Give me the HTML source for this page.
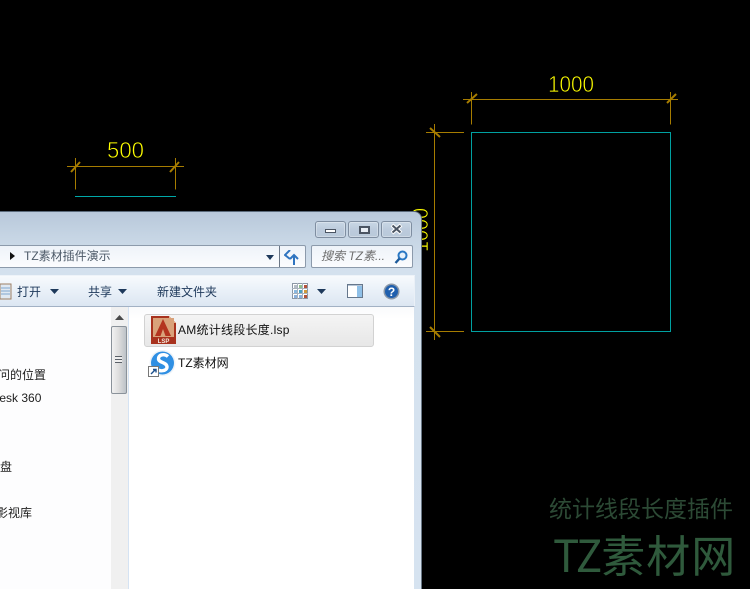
<!DOCTYPE html>
<html><head><meta charset="utf-8"><style>
html,body{margin:0;padding:0;background:#000;width:750px;height:589px;overflow:hidden}
body{position:relative;font-family:"Liberation Sans","Noto Sans CJK SC",sans-serif}
div,svg,span.a{position:absolute}
.t{font-size:12px;line-height:16px;white-space:nowrap;color:#1e1e1e}
.tb{color:#1e395b}
.b{top:221px;height:15px;width:29px;border:1px solid #7f8ea1;border-radius:3px;background:linear-gradient(#c9d7e5,#bccbdc 50%,#b9c9da);box-shadow:inset 0 0 0 1px rgba(255,255,255,.3)}
</style></head><body>
<svg width="750" height="589" style="left:0;top:0" shape-rendering="crispEdges">
<g stroke="#a67c00" stroke-width="1" fill="none">
<path d="M463 99.500H678M471.500 92V124.500M670.500 92V124.500M426 132.500H464M426 331.500H464M434.500 124V340M67 166.500H184M75.500 158V189.500M175.500 158V189.500"/>
</g>
<g stroke="#a67c00" stroke-width="2" fill="none" shape-rendering="auto">
<path d="M467 103L477 94M667 103L676 94M71 172L80 162M170 172L179 162M430 128L440 137M430 327L440 337"/>
</g>
<g fill="none" stroke="#00a0a0" stroke-width="1">
<rect x="471.500" y="132.500" width="199" height="199"/>
</g>
<path d="M75 196.500H176" stroke="#00a8a8" stroke-width="1"/>
<g fill="#ffff00" stroke="#000" stroke-width=".65" font-family="Liberation Sans, sans-serif" font-size="23" shape-rendering="auto" style="paint-order:fill stroke">
<text x="548" y="92" textLength="46" lengthAdjust="spacingAndGlyphs">1000</text>
<text x="107" y="158" textLength="37" lengthAdjust="spacingAndGlyphs">500</text>
<text transform="translate(428 252) rotate(-90)" textLength="44" lengthAdjust="spacingAndGlyphs">1000</text>
</g>
</svg>

<div style="left:549px;top:492px;font-size:23px;line-height:30px;color:#2c4a35;font-family:'Noto Sans CJK SC',sans-serif;white-space:nowrap">统计线段长度插件</div>
<div style="left:553px;top:522px;font-size:44px;line-height:62px;color:#2f5a3c;font-family:'Noto Sans CJK SC',sans-serif;white-space:nowrap;letter-spacing:1px"><span style="letter-spacing:-1px">TZ</span>素材网</div>

<!-- window -->
<div style="left:-8px;top:211px;width:429px;height:378px;background:linear-gradient(#b8c8da 0,#c6d5e4 25px,#d4e1ee 60px,#d6e3f0 100%);border-right:1px solid #6a7886;border-top:1px solid #5a6a7a;border-top-right-radius:8px"></div>
<div class="b" style="left:315px"></div>
<div class="b" style="left:348px"></div>
<div class="b" style="left:381px;width:29px"></div>
<div style="left:325px;top:229px;width:9px;height:2px;border:1px solid #4b5563;background:#fff"></div>
<div style="left:359px;top:226px;width:7px;height:4px;border:2px solid #4b5563;background:#e8eef5"></div>
<svg width="14" height="12" style="left:390px;top:223px"><path d="M2 2L11 10M11 2L2 10" stroke="#fff" stroke-width="4"/><path d="M2.500 2.500L10.500 9.500M10.500 2.500L2.500 9.500" stroke="#4b5563" stroke-width="2"/></svg>

<!-- address -->
<div style="left:-4px;top:245px;width:308px;height:21px;border:1px solid #8c9aab;border-radius:2px;background:linear-gradient(#eef3f9,#fbfcfe)"></div>
<div style="left:279px;top:246px;width:1px;height:21px;background:#6a7686"></div>
<svg width="10" height="10" style="left:7px;top:251px"><path d="M3 1L8 5L3 9Z" fill="#111"/></svg>
<div class="t" style="left:24px;top:248px;color:#4d5a68">TZ素材插件演示</div>
<svg width="10" height="7" style="left:265px;top:254px"><path d="M1 1H9L5 6Z" fill="#1e395b"/></svg>
<svg width="16" height="16" style="left:284px;top:250px"><path d="M6 0L1 5L6 9" fill="none" stroke="#2f74c0" stroke-width="2"/><path d="M10 15V6M6 9L10 5L14 9" fill="none" stroke="#2f74c0" stroke-width="2"/></svg>

<!-- search -->
<div style="left:311px;top:245px;width:100px;height:21px;border:1px solid #8c9aab;border-radius:2px;background:linear-gradient(#eef3f9,#fbfcfe)"></div>
<div class="t" style="left:321px;top:248px;font-style:italic;color:#6d6d6d">搜索 TZ素...</div>
<svg width="14" height="15" style="left:394px;top:250px"><circle cx="8.500" cy="5.500" r="4" fill="#e8f2fb" stroke="#2a78c4" stroke-width="2"/><path d="M5.500 8.500L1.500 13" stroke="#1c5a9a" stroke-width="2.400"/></svg>

<!-- toolbar -->
<div style="left:-4px;top:275px;width:418px;height:30px;background:linear-gradient(#f8fafd,#e9f0f8 50%,#dce6f2);border-top:1px solid #eef3f9;border-right:1px solid #eaf0f7;border-bottom:1px solid #a2b1c4"></div>
<svg width="14" height="18" style="left:-1px;top:283px"><rect x="1" y="1" width="11" height="15" fill="#dfe8f2" stroke="#9d7f64"/><path d="M2 5H11M2 8H11M2 11H11" stroke="#7fa6cf"/></svg>
<div class="t tb" style="left:17px;top:284px">打开</div>
<svg width="9" height="6" style="left:50px;top:289px"><path d="M0 0H9L4.500 5Z" fill="#1e395b"/></svg>
<div class="t tb" style="left:88px;top:284px">共享</div>
<svg width="9" height="6" style="left:118px;top:289px"><path d="M0 0H9L4.500 5Z" fill="#1e395b"/></svg>
<div class="t tb" style="left:157px;top:284px">新建文件夹</div>
<svg width="16" height="16" style="left:292px;top:283px" shape-rendering="crispEdges">
<rect x=".5" y=".5" width="15" height="15" fill="#fff" stroke="#8c97a5"/>
<path d="M5.500 0V16M10.500 0V16M0 5.500H16M0 10.500H16" stroke="#a8b2bd"/>
<rect x="2" y="2" width="3" height="3" fill="#b4bcc6"/><rect x="7" y="2" width="3" height="3" fill="#8fbf8f"/><rect x="12" y="2" width="3" height="3" fill="#b4523a"/>
<rect x="2" y="7" width="3" height="3" fill="#8ab8e0"/><rect x="7" y="7" width="3" height="3" fill="#4aa0c0"/><rect x="12" y="7" width="3" height="3" fill="#d09a3a"/>
<rect x="2" y="12" width="3" height="3" fill="#8ab0dc"/><rect x="7" y="12" width="3" height="3" fill="#8ab0dc"/><rect x="12" y="12" width="3" height="3" fill="#b4523a"/>
</svg>
<svg width="9" height="6" style="left:317px;top:289px"><path d="M0 0H9L4.500 5Z" fill="#1e395b"/></svg>
<svg width="16" height="14" style="left:347px;top:284px" shape-rendering="crispEdges"><rect x=".5" y=".5" width="15" height="13" fill="#fff" stroke="#66778c"/><rect x="10" y="2" width="5" height="11" fill="#8fc0e8"/><path d="M1 1.500H15" stroke="#b8c6d6"/></svg>
<svg width="17" height="17" style="left:383px;top:283px"><circle cx="8.500" cy="8.500" r="8" fill="#8b98a8"/><circle cx="8.500" cy="8.500" r="6.500" fill="#1f5fae"/><text x="8.500" y="13" text-anchor="middle" font-size="12" font-weight="bold" fill="#fff" font-family="Liberation Sans">?</text></svg>

<!-- left pane -->
<div style="left:-4px;top:307px;width:115px;height:282px;background:#fdfdfe"></div>
<div class="t" style="left:-14px;top:367px">访问的位置</div>
<div class="t" style="left:-32px;top:390px">Autodesk 360</div>
<div class="t" style="left:-12px;top:459px">磁盘</div>
<div class="t" style="left:-4px;top:505px">影视库</div>

<!-- scrollbar -->
<div style="left:111px;top:307px;width:17px;height:282px;background:#f0f0f0"></div>
<div style="left:128px;top:307px;width:1px;height:282px;background:#d5e3f3"></div>
<svg width="9" height="5" style="left:115px;top:315px"><path d="M0 5L4.500 0L9 5Z" fill="#4a4a4a"/></svg>
<div style="left:111px;top:326px;width:14px;height:66px;border:1px solid #8a929a;border-radius:2px;background:linear-gradient(90deg,#f2f2f2,#dcdcdc 50%,#bcc2c8)"></div>
<div style="left:115px;top:356px;width:7px;height:7px;background:repeating-linear-gradient(#5a6068 0 1px,#eee 1px 3px)"></div>

<!-- content -->
<div style="left:129px;top:307px;width:285px;height:282px;background:linear-gradient(#f9fafc,#fff 12px)"></div>
<div style="left:144px;top:314px;width:228px;height:31px;border:1px solid #d2d2d2;border-radius:3px;background:linear-gradient(#f4f4f4,#e7e7e7)"></div>
<svg width="26" height="29" style="left:151px;top:316px"><path d="M0 0H18L25 7V28H0Z" fill="#a8321e"/><path d="M18 0L25 7H18Z" fill="#e6b08a"/><rect x="2" y="2" width="21" height="19" fill="#d9a27a"/><path d="M12 3L20 20H14.500L12 13L9.500 20H4Z" fill="#b4341f"/><text x="12.500" y="27" text-anchor="middle" font-size="6" font-weight="bold" fill="#f5e8dc" font-family="Liberation Sans">LSP</text></svg>
<div class="t" style="left:178px;top:322px;font-size:12px;letter-spacing:.25px;color:#111">AM统计线段长度.lsp</div>
<svg width="28" height="28" style="left:148px;top:349px"><circle cx="14.500" cy="14" r="13" fill="#eef3f8"/><circle cx="14.500" cy="14" r="11.500" fill="#2f8fe3"/><path d="M20 7.500C16 4 10 6 10.500 10C11 14 19 13 19 18C19 22 12 23 8 20" fill="none" stroke="#fff" stroke-width="3.400"/><rect x=".5" y="17.500" width="10" height="10" fill="#fff" stroke="#777"/><path d="M3 25L7 21M5 20.500H8V23.500" fill="none" stroke="#1c4f8c" stroke-width="1.400"/></svg>
<div class="t" style="left:178px;top:355px;color:#111">TZ素材网</div>
</body></html>
